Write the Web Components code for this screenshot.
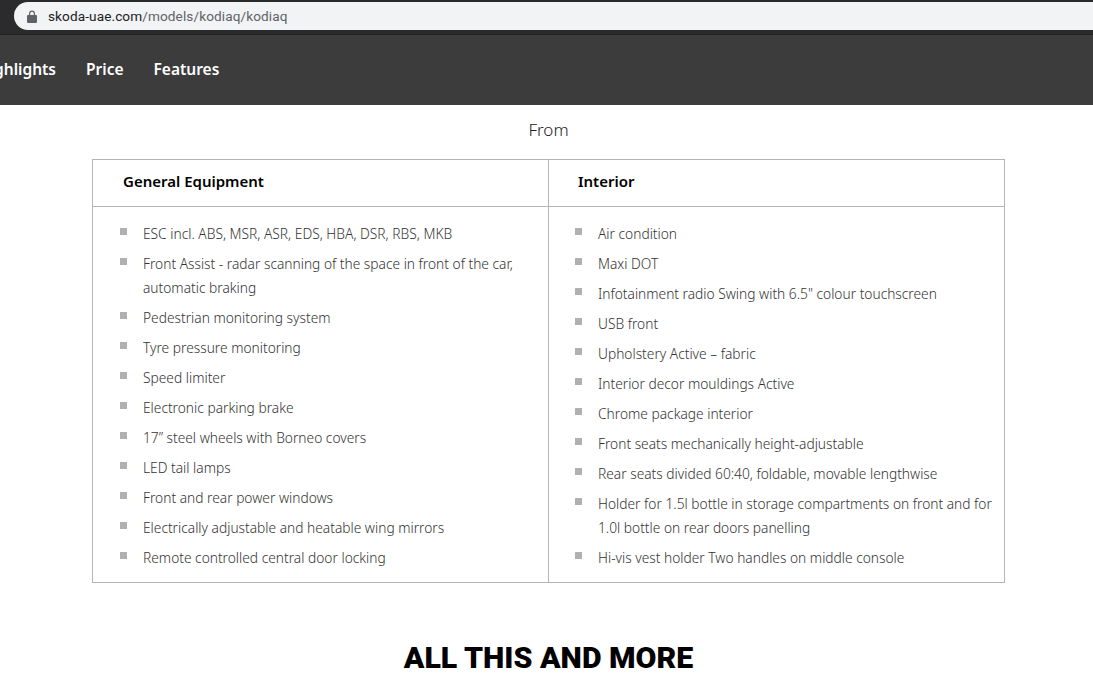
<!DOCTYPE html>
<html>
<head>
<meta charset="utf-8">
<title>Kodiaq</title>
<style>
  html, body { margin: 0; padding: 0; background: #fff; height: 690px; overflow: hidden; }
  body { font-family: "Noto Sans", sans-serif; }
</style>
</head>
<body>
<browser-bar url-host="skoda-uae.com" url-path="/models/kodiaq/kodiaq"></browser-bar>
<site-nav>
  <a href="#">Highlights</a>
  <a href="#">Price</a>
  <a href="#">Features</a>
</site-nav>
<price-line>From</price-line>
<spec-table>
  <spec-column title="General Equipment">
    <li>ESC incl. ABS, MSR, ASR, EDS, HBA, DSR, RBS, MKB</li>
    <li>Front Assist - radar scanning of the space in front of the car, automatic braking</li>
    <li>Pedestrian monitoring system</li>
    <li>Tyre pressure monitoring</li>
    <li>Speed limiter</li>
    <li>Electronic parking brake</li>
    <li>17” steel wheels with Borneo covers</li>
    <li>LED tail lamps</li>
    <li>Front and rear power windows</li>
    <li>Electrically adjustable and heatable wing mirrors</li>
    <li>Remote controlled central door locking</li>
  </spec-column>
  <spec-column title="Interior">
    <li>Air condition</li>
    <li>Maxi DOT</li>
    <li>Infotainment radio Swing with 6.5" colour touchscreen</li>
    <li>USB front</li>
    <li>Upholstery Active – fabric</li>
    <li>Interior decor mouldings Active</li>
    <li>Chrome package interior</li>
    <li>Front seats mechanically height-adjustable</li>
    <li>Rear seats divided 60:40, foldable, movable lengthwise</li>
    <li>Holder for 1.5l bottle in storage compartments on front and for 1.0l bottle on rear doors panelling</li>
    <li>Hi-vis vest holder Two handles on middle console</li>
  </spec-column>
</spec-table>
<section-title>ALL THIS AND MORE</section-title>

<script>
class BrowserBar extends HTMLElement {
  constructor() {
    super()
    this.attachShadow({mode: "open"})
    this.shadowRoot.innerHTML = `
      <style>
        :host {
          display: block;
          height: 35px;
          box-sizing: border-box;
          padding: 2px 0 0 14px;
          background: #2b2b2d;
          border-bottom: 1px solid #222;
        }
        .omnibox {
          height: 28px;
          display: flex;
          align-items: center;
          gap: 11px;
          padding-left: 13px;
          background: #f1f3f4;
          border-radius: 14px 0 0 14px;
          font: 13.6px "Roboto", sans-serif;
          letter-spacing: .1px;
          color: #202124;
        }
        svg { display: block; }
        .path { color: #5f6368; }
      </style>
      <div class="omnibox">
        <svg width="10" height="13" viewBox="0 0 10 13">
          <path fill="#5f6368" d="M1 5h1V3.5a3 3 0 0 1 6 0V5h1a1 1 0 0 1 1 1v6a1 1 0 0 1-1 1H1a1 1 0 0 1-1-1V6a1 1 0 0 1 1-1zm2.2 0h3.6V3.5a1.8 1.8 0 0 0-3.6 0z"/>
        </svg>
        <span>${this.getAttribute("url-host")}<span class="path">${this.getAttribute("url-path")}</span></span>
      </div>
    `
  }
}

class SiteNav extends HTMLElement {
  constructor() {
    super()
    this.attachShadow({mode: "open"})
    this.shadowRoot.innerHTML = `
      <style>
        :host {
          display: flex;
          align-items: center;
          gap: 30px;
          height: 70px;
          box-sizing: border-box;
          padding-bottom: 2px;
          background: #3c3c3c;
          overflow: hidden;
          font: 600 15.5px "Noto Sans", sans-serif;
        }
        ::slotted(a) { color: #fff; text-decoration: none; }
        ::slotted(a:first-child) { margin-left: -22px; }
      </style>
      <slot></slot>
    `
  }
}

class PriceLine extends HTMLElement {
  constructor() {
    super()
    this.attachShadow({mode: "open"})
    this.shadowRoot.innerHTML = `
      <style>
        :host {
          display: block;
          height: 54px;
          padding: 14px 0 0 4px;
          box-sizing: border-box;
          text-align: center;
          font: 300 17px/22px "Noto Sans", sans-serif;
          color: #222;
        }
      </style>
      <slot></slot>
    `
  }
}

class SpecTable extends HTMLElement {
  constructor() {
    super()
    this.attachShadow({mode: "open"})
    this.shadowRoot.innerHTML = `
      <style>
        :host {
          display: grid;
          grid-template-columns: 456px 455px;
          width: 913px;
          height: 424px;
          box-sizing: border-box;
          margin-left: 92px;
          border: 1px solid #b5b5b5;
        }
      </style>
      <slot></slot>
    `
  }
}

class SpecColumn extends HTMLElement {
  constructor() {
    super()
    this.attachShadow({mode: "open"})
    this.shadowRoot.innerHTML = `
      <style>
        :host {
          display: block;
          box-sizing: border-box;
        }
        :host(:first-child) { border-right: 1px solid #b5b5b5; }
        :host(:last-child) { margin-left: -1px; }
        h3 {
          margin: 0;
          height: 47px;
          box-sizing: border-box;
          padding-left: 30px;
          border-bottom: 1px solid #b5b5b5;
          font: 600 15px/43px "Noto Sans", sans-serif;
          color: #000;
        }
        ul {
          list-style: none;
          margin: 0;
          padding: 15px 10px 0 50px;
        }
        ::slotted(li) {
          position: relative;
          padding-bottom: 6px;
          font: 300 13.75px/24px "Noto Sans", sans-serif;
          color: #333;
        }
        ::slotted(li)::before {
          content: "";
          position: absolute;
          left: -23px;
          top: 6px;
          width: 7px;
          height: 7px;
          background: #b0b0b0;
        }
      </style>
      <h3>${this.getAttribute("title")}</h3>
      <ul><slot></slot></ul>
    `
  }
}

class SectionTitle extends HTMLElement {
  constructor() {
    super()
    this.attachShadow({mode: "open"})
    this.shadowRoot.innerHTML = `
      <style>
        :host {
          display: block;
          margin-top: 53px;
          padding-left: 4px;
          text-align: center;
          font: 900 30.3px/44px "Roboto", sans-serif;
          color: #000;
        }
      </style>
      <slot></slot>
    `
  }
}

customElements.define("browser-bar", BrowserBar)
customElements.define("site-nav", SiteNav)
customElements.define("price-line", PriceLine)
customElements.define("spec-table", SpecTable)
customElements.define("spec-column", SpecColumn)
customElements.define("section-title", SectionTitle)
</script>
</body>
</html>
